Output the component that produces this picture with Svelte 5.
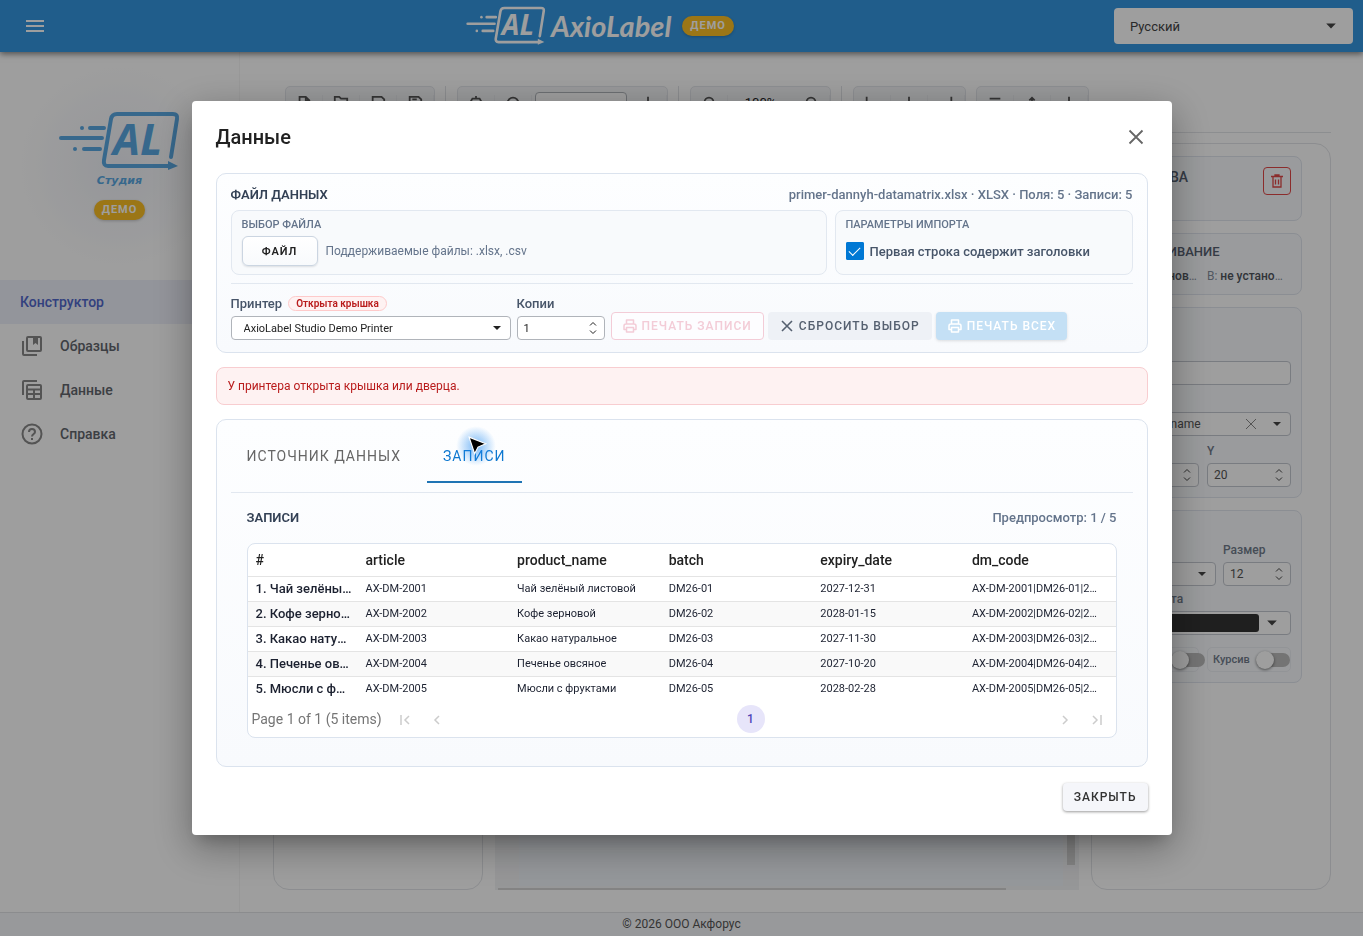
<script>
	let tab = $state('records');
	let headerRow = $state(true);
	let copies = $state(1);

	const columns = ['#', 'article', 'product_name', 'batch', 'expiry_date', 'dm_code'];
	const records = [
		{ title: 'Чай зелёный листовой', article: 'AX-DM-2001', batch: 'DM26-01', expiry: '2027-12-31' },
		{ title: 'Кофе зерновой', article: 'AX-DM-2002', batch: 'DM26-02', expiry: '2028-01-15' },
		{ title: 'Какао натуральное', article: 'AX-DM-2003', batch: 'DM26-03', expiry: '2027-11-30' },
		{ title: 'Печенье овсяное', article: 'AX-DM-2004', batch: 'DM26-04', expiry: '2027-10-20' },
		{ title: 'Мюсли с фруктами', article: 'AX-DM-2005', batch: 'DM26-05', expiry: '2028-02-28' }
	];
</script>

{#snippet logo()}
	<svg class="logo" viewBox="0 0 121 61" aria-hidden="true">
		<g fill="none" stroke="currentColor" stroke-width="4" stroke-linecap="round" stroke-linejoin="round">
			<path d="M112 46 L118 8 Q119 3 114 3 H58 Q53 3 52 8 L45 49 Q44 55 49 55 H110" />
			<path d="M31 17 H45 M2 27 H43 M25 38 H41" />
		</g>
		<circle cx="23" cy="17" r="2" fill="currentColor" />
		<circle cx="16" cy="38" r="2" fill="currentColor" />
		<path d="M109 50 L119 55 L109 59 Z" fill="currentColor" />
		<text x="54" y="44" fill="currentColor">AL</text>
	</svg>
{/snippet}

{#snippet caret()}
	<svg class="caret" width="10" height="6" viewBox="0 0 10 6" aria-hidden="true"><path d="M1 1h8L5 5z" fill="currentColor" /></svg>
{/snippet}

{#snippet steps()}
	<svg class="steps" width="8" height="14" viewBox="0 0 8 14" fill="none" stroke="currentColor" aria-hidden="true"><path d="M1 4.500L4 1.500l3 3M1 9.500l3 3 3-3" /></svg>
{/snippet}

{#snippet printer()}
	<svg width="14" height="14" viewBox="0 0 14 14" fill="none" stroke="currentColor" stroke-width="1.500" stroke-linejoin="round" aria-hidden="true">
		<path d="M3.500 5V1h7v4M3.500 10.500H1V7q0-2 2-2h8q2 0 2 2v3.500h-2.500M3.500 8.500h7V13h-7z" />
	</svg>
{/snippet}

<div class="app">
	<header class="topbar">
		<button class="menu" aria-label="Меню"><span></span><span></span><span></span></button>
		<div class="brand">
			{@render logo()}
			<span class="name">AxioLabel</span>
			<span class="demo">ДЕМО</span>
		</div>
		<div class="control lang">
			<select aria-label="Язык"><option>Русский</option></select>
			{@render caret()}
		</div>
	</header>

	<div class="body">
		<aside>
			<div class="studio">
				{@render logo()}
				<span class="studio-name">Студия</span>
				<span class="demo">ДЕМО</span>
			</div>
			<nav>
				<a class="active" href="#designer">Конструктор</a>
				<a href="#samples">
					<svg width="24" height="24" viewBox="0 0 24 24" fill="none" stroke="currentColor" stroke-width="2" aria-hidden="true">
						<rect x="7" y="3" width="14" height="14" rx="1" /><path d="M3 7v13q0 1 1 1h13" /><path d="M13 4h5v7l-2.500-2-2.500 2z" fill="currentColor" stroke="none" />
					</svg>
					Образцы
				</a>
				<a href="#data">
					<svg width="24" height="24" viewBox="0 0 24 24" fill="none" stroke="currentColor" stroke-width="2" aria-hidden="true">
						<rect x="7" y="7" width="14" height="14" rx="1" /><path d="M3 17V4q0-1 1-1h13M7 11.500h14M7 16h14M14 11.500V21" />
					</svg>
					Данные
				</a>
				<a href="#help">
					<svg width="24" height="24" viewBox="0 0 24 24" fill="none" stroke="currentColor" stroke-width="2" aria-hidden="true">
						<circle cx="12" cy="12" r="9.500" /><path d="M9 10q0-3 3-3t3 3c0 2-3 2-3 4.500M12 16v2" />
					</svg>
					Справка
				</a>
			</nav>
		</aside>

		<main>
			<div class="toolbar">
				<div class="group">
					<button aria-label="Новый"><svg viewBox="0 0 18 18"><path d="M4 2h7l4 4v10H4zM11 2v4h4" /></svg></button>
					<button aria-label="Открыть"><svg viewBox="0 0 18 18"><path d="M2 15V2h5l2 2h7v11z" /></svg></button>
					<button aria-label="Сохранить"><svg viewBox="0 0 18 18"><path d="M3 2h10l3 3v11H3zM6 16v-6h7v6" /></svg></button>
					<button aria-label="Сохранить как"><svg viewBox="0 0 18 18"><path d="M3 2h10l3 3v11H3zM6 5h5" /></svg></button>
				</div>
				<i class="sep"></i>
				<div class="group">
					<button aria-label="Настройки"><svg viewBox="0 0 18 18"><path d="M9 1v3M5 4h8l3 5-3 5H5L2 9z" /></svg></button>
					<button aria-label="Просмотр"><svg viewBox="0 0 18 18"><circle cx="9" cy="9" r="6" /></svg></button>
					<input class="zoom" aria-label="Размер" />
					<button aria-label="Добавить"><svg viewBox="0 0 18 18"><path d="M9 2v14M2 9h14" /></svg></button>
				</div>
				<i class="sep"></i>
				<div class="group">
					<button aria-label="Уменьшить"><svg viewBox="0 0 18 18"><circle cx="9" cy="8" r="5" /><path d="M13 11l4 4" /></svg></button>
					<span class="percent">100%</span>
					<button aria-label="Увеличить"><svg viewBox="0 0 18 18"><circle cx="9" cy="8" r="5" /><path d="M13 11l4 4" /></svg></button>
				</div>
				<i class="sep"></i>
				<div class="group">
					<button aria-label="По левому краю"><svg viewBox="0 0 18 18"><path d="M3 2v15M6 9h10" /></svg></button>
					<button aria-label="По центру"><svg viewBox="0 0 18 18"><path d="M9 2v15M3 9h12" /></svg></button>
					<button aria-label="По правому краю"><svg viewBox="0 0 18 18"><path d="M15 2v15M2 9h10" /></svg></button>
				</div>
				<div class="group">
					<button aria-label="По верху"><svg viewBox="0 0 18 18"><path d="M3 4h12M9 7v9" /></svg></button>
					<button aria-label="Вверх"><svg viewBox="0 0 18 18"><path d="M9 16V3M6 6l3-3 3 3" /></svg></button>
					<button aria-label="Вниз"><svg viewBox="0 0 18 18"><path d="M9 2v13M5 12l4 4 4-4" /></svg></button>
				</div>
			</div>

			<div class="workspace">
				<div class="panel"></div>
				<div class="canvas"><div class="paper"></div><i class="vthumb"></i><i class="hthumb"></i></div>
				<div class="panel props">
					<section class="prop-head">
						<h3>СВОЙСТВА</h3>
						<button class="trash" aria-label="Удалить">
							<svg width="14" height="14" viewBox="0 0 14 14" fill="none" stroke="currentColor" stroke-width="1.300"><path d="M1 2.500h12M5 2V1h4v1M3 3v10h8V3M5.500 5.500v5M8.500 5.500v5" /></svg>
						</button>
					</section>
					<section>
						<h3>ВЫРАВНИВАНИЕ</h3>
						<div class="pair align"><span>Г: <b>не установлено</b></span><span>В: <b>не установлено</b></span></div>
					</section>
					<section>
						<h3>ОБЪЕКТ</h3>
						<label>Имя<input /></label>
						<label>Поле
							<span class="control">
								<select><option>product_name</option></select>
								<svg class="clear" width="12" height="12" viewBox="0 0 12 12" stroke="currentColor"><path d="M1 1l10 10M11 1L1 11" /></svg>
								{@render caret()}
							</span>
						</label>
						<div class="pair">
							<label>X<span class="control"><input type="number" value="20" />{@render steps()}</span></label>
							<label>Y<span class="control"><input type="number" value="20" />{@render steps()}</span></label>
						</div>
					</section>
					<section class="font">
						<h3>ШРИФТ</h3>
						<div class="pair">
							<label>Шрифт<span class="control"><select><option>Arial</option></select>{@render caret()}</span></label>
							<label>Размер<span class="control"><input type="number" value="12" />{@render steps()}</span></label>
						</div>
						<label>Цвет текста<span class="color"><span class="swatch"></span>{@render caret()}</span></label>
						<div class="toggles">
							<label>Жирный<input type="checkbox" role="switch" /></label>
							<label>Курсив<input type="checkbox" role="switch" /></label>
						</div>
					</section>
				</div>
			</div>
		</main>
	</div>

	<footer>© 2026 ООО Акфорус</footer>
</div>

<div class="overlay">
	<div class="dialog" role="dialog" aria-modal="true" aria-labelledby="dialog-title">
		<div class="dialog-head">
			<h2 id="dialog-title">Данные</h2>
			<button class="close" aria-label="Закрыть окно">
				<svg width="16" height="16" viewBox="0 0 16 16" stroke="currentColor" stroke-width="1.800" aria-hidden="true"><path d="M1.500 1.500l13 13M14.500 1.500l-13 13" /></svg>
			</button>
		</div>

		<section class="card file">
			<div class="row-head">
				<h3>ФАЙЛ ДАННЫХ</h3>
				<span>primer-dannyh-datamatrix.xlsx · XLSX · Поля: 5 · Записи: 5</span>
			</div>
			<div class="boxes">
				<div class="box">
					<h4>ВЫБОР ФАЙЛА</h4>
					<div class="line">
						<button class="pick">ФАЙЛ</button>
						<span class="hint">Поддерживаемые файлы: .xlsx, .csv</span>
					</div>
				</div>
				<div class="box">
					<h4>ПАРАМЕТРЫ ИМПОРТА</h4>
					<label class="line check"><input type="checkbox" bind:checked={headerRow} />Первая строка содержит заголовки</label>
				</div>
			</div>
			<div class="print">
				<div class="field wide">
					<div class="label"><label for="printer">Принтер</label><span class="status">Открыта крышка</span></div>
					<div class="control">
						<select id="printer"><option>AxioLabel Studio Demo Printer</option></select>
						{@render caret()}
					</div>
				</div>
				<div class="field">
					<div class="label"><label for="copies">Копии</label></div>
					<div class="control"><input id="copies" type="number" bind:value={copies} />{@render steps()}</div>
				</div>
				<div class="buttons">
					<button class="btn one" disabled>{@render printer()}ПЕЧАТЬ ЗАПИСИ</button>
					<button class="btn reset">
						<svg width="12" height="12" viewBox="0 0 12 12" stroke="currentColor" stroke-width="1.600" aria-hidden="true"><path d="M1 1l10 10M11 1L1 11" /></svg>СБРОСИТЬ ВЫБОР
					</button>
					<button class="btn all" disabled>{@render printer()}ПЕЧАТЬ ВСЕХ</button>
				</div>
			</div>
		</section>

		<div class="alert" role="alert">У принтера открыта крышка или дверца.</div>

		<section class="card data">
			<div class="tabs" role="tablist">
				<button role="tab" aria-selected={tab === 'source'} class:on={tab === 'source'} onclick={() => (tab = 'source')}>ИСТОЧНИК ДАННЫХ</button>
				<button role="tab" aria-selected={tab === 'records'} class:on={tab === 'records'} onclick={() => (tab = 'records')}>
					ЗАПИСИ
					<span class="pointer">
						<svg width="20" height="20" viewBox="0 0 18 18" aria-hidden="true"><path d="M1 1l15 6-7 3-3 6z" fill="#000" stroke="#fff" stroke-width="1" /></svg>
					</span>
				</button>
			</div>
			<div class="records">
				<div class="row-head">
					<h3>ЗАПИСИ</h3>
					<span>Предпросмотр: 1 / 5</span>
				</div>
				<div class="grid">
					<table>
						<thead>
							<tr>{#each columns as column}<th>{column}</th>{/each}</tr>
						</thead>
						<tbody>
							{#each records as row, i}
								<tr>
									<td>{i + 1}. {row.title}</td>
									<td>{row.article}</td>
									<td>{row.title}</td>
									<td>{row.batch}</td>
									<td>{row.expiry}</td>
									<td>{row.article}|{row.batch}|{row.expiry}</td>
								</tr>
							{/each}
						</tbody>
					</table>
					<div class="pager">
						<span>Page 1 of 1 (5 items)</span>
						<button disabled aria-label="Первая"><svg width="12" height="12" viewBox="0 0 12 12"><path d="M2 1v10M10 2L6 6l4 4" /></svg></button>
						<button disabled aria-label="Назад"><svg width="12" height="12" viewBox="0 0 12 12"><path d="M8 2L4 6l4 4" /></svg></button>
						<div class="pages"><button class="page">1</button></div>
						<button disabled aria-label="Вперёд"><svg width="12" height="12" viewBox="0 0 12 12"><path d="M4 2l4 4-4 4" /></svg></button>
						<button disabled aria-label="Последняя"><svg width="12" height="12" viewBox="0 0 12 12"><path d="M2 2l4 4-4 4M10 1v10" /></svg></button>
					</div>
				</div>
			</div>
		</section>

		<div class="actions"><button class="dismiss">ЗАКРЫТЬ</button></div>
	</div>
</div>

<style>
	:global(body) {
		margin: 0;
		background: #fff;
		font-family: Roboto, "Noto Sans", sans-serif;
		font-size: 12px;
		color: #212121;
	}
	* {
		box-sizing: border-box;
	}
	h2,
	h3,
	h4 {
		margin: 0;
	}
	button,
	input,
	select {
		font: inherit;
		color: inherit;
		margin: 0;
	}
	button {
		padding: 0;
		border: none;
		background: none;
		cursor: pointer;
	}
	select,
	input {
		appearance: none;
		width: 100%;
		min-width: 0;
		height: 24px;
		padding: 0 12px;
		border: 1px solid #b0b4ba;
		border-radius: 4px;
		background: #fff;
	}
	input {
		padding: 0 6px;
	}
	input[type='number'] {
		-moz-appearance: textfield;
		appearance: textfield;
	}
	input::-webkit-inner-spin-button {
		display: none;
	}

	/* a control with its arrow stacked in one grid cell */
	.control {
		display: grid;
		align-items: center;
	}
	.control > :global(*) {
		grid-area: 1 / 1;
	}
	.caret,
	.steps,
	.clear {
		justify-self: end;
		margin-right: 9px;
		pointer-events: none;
	}
	.steps {
		margin-right: 8px;
	}
	.clear {
		margin-right: 34px;
		color: #888;
	}

	.app {
		min-height: 100vh;
		display: flex;
		flex-direction: column;
	}
	.topbar {
		display: flex;
		align-items: center;
		justify-content: space-between;
		height: 52px;
		padding: 0 10px 0 26px;
		background: #3496e0;
		box-shadow: 0 2px 6px rgba(0, 0, 0, 0.5);
		color: #fff;
		z-index: 1;
	}
	.menu {
		display: flex;
		flex-direction: column;
		gap: 3px;
		width: 60px;
	}
	.menu span {
		width: 18px;
		height: 2px;
		background: #fff;
	}
	.logo {
		width: 121px;
		height: 61px;
		flex-shrink: 0;
	}
	.logo text {
		font: italic 700 43px "Open Sans", sans-serif;
	}
	.brand {
		display: flex;
		align-items: center;
	}
	.brand .logo {
		width: 80px;
		height: 40px;
	}
	.name {
		margin: 0 11px 0 5px;
		font: italic 700 29px/36px Lato, sans-serif;
	}
	.demo {
		padding: 0 8px;
		border-radius: 10px;
		background: #fbbf24;
		box-shadow: 0 1px 3px rgba(0, 0, 0, 0.2);
		color: #fff;
		font-size: 11px;
		font-weight: 700;
		line-height: 20px;
		letter-spacing: 1px;
	}
	.lang {
		width: 239px;
		color: #444;
		font-size: 13px;
	}
	.lang select {
		height: 36px;
		padding: 0 16px;
		border: none;
		background: #fff;
	}
	.lang .caret {
		width: 12px;
		height: 8px;
		margin-right: 16px;
	}

	.body {
		flex: 1;
		display: flex;
	}
	aside {
		width: 240px;
		flex-shrink: 0;
		border-right: 1px solid #f6f6f6;
	}
	.studio {
		display: flex;
		flex-direction: column;
		align-items: center;
		height: 228px;
		padding-top: 59px;
		background: radial-gradient(circle at 50% 50%, #f0f2f8, #fff 60%);
		color: #5aa8e2;
	}
	.studio-name {
		margin-bottom: 11px;
		font: italic 700 11px/17px "DejaVu Sans", sans-serif;
	}
	nav a {
		display: flex;
		align-items: center;
		gap: 16px;
		height: 44px;
		padding: 0 20px;
		color: #62666d;
		font-size: 14px;
		font-weight: 500;
		text-decoration: none;
	}
	nav .active {
		background: #eef0fa;
		color: #5168cc;
	}
	nav svg {
		color: #888;
	}

	main {
		flex: 1;
		display: flex;
		flex-direction: column;
		min-width: 0;
		padding: 34px 32px 22px 33px;
	}
	.toolbar {
		display: flex;
		gap: 10px;
		padding: 0 12px 13px;
		border-bottom: 1px solid #e3e5e9;
	}
	.group {
		display: flex;
		align-items: center;
		height: 33px;
		border: 1px solid #e3e6eb;
		border-radius: 5px;
		background: #f5f6f8;
	}
	.group button {
		display: flex;
		justify-content: center;
		width: 37px;
		border-right: 1px solid #eceef1;
	}
	.group svg {
		width: 16px;
		height: 16px;
		fill: none;
		stroke: #555;
		stroke-width: 2;
	}
	.zoom {
		width: 92px;
		height: 22px;
		margin: 0 3px;
	}
	.percent {
		width: 65px;
		font-size: 13px;
		text-align: center;
	}
	.sep {
		width: 2px;
		border-left: 1px solid #e0e2e6;
	}
	.workspace {
		flex: 1;
		display: flex;
		gap: 12px;
		margin-top: 10px;
	}
	.panel {
		width: 210px;
		border: 1px solid #e2e4e8;
		border-radius: 16px;
	}
	.canvas {
		flex: 1;
		display: grid;
		background: #f3f4f6;
	}
	.canvas > * {
		grid-area: 1 / 1;
	}
	.paper {
		margin: 24px 16px 4px 24px;
		background: #f1f5fa;
	}
	.vthumb {
		place-self: end;
		width: 8px;
		height: 400px;
		margin: 0 4px 25px;
		background: #d4d4d4;
	}
	.hthumb {
		align-self: end;
		width: 87%;
		height: 2px;
		margin-left: 3px;
		background: #d4d4d4;
	}

	.props {
		display: flex;
		flex-direction: column;
		gap: 12px;
		width: 240px;
		padding: 12px 28px 12px 12px;
		color: #566070;
	}
	.props section {
		display: flex;
		flex-direction: column;
		gap: 8px;
		padding: 10px;
		border: 1px solid #e0e5ee;
		border-radius: 8px;
		background: #f9fbfe;
	}
	.props h3 {
		font-size: 13px;
		font-weight: 500;
		line-height: 16px;
	}
	.props .prop-head {
		flex-direction: row;
		justify-content: space-between;
		min-height: 65px;
	}
	.props .prop-head h3 {
		padding-top: 2px;
		font-size: 14px;
	}
	.trash {
		display: flex;
		align-items: center;
		justify-content: center;
		width: 28px;
		height: 28px;
		border: 1px solid #e04848;
		border-radius: 4px;
		color: #e04848;
	}
	.props label {
		display: flex;
		flex-direction: column;
		gap: 5px;
		min-width: 0;
		font-weight: 500;
		line-height: 14px;
		color: #717b8b;
	}
	.props input,
	.props select {
		border-color: #c4c8d0;
		font-weight: 400;
		color: #555;
	}
	.props select {
		padding: 0 8px;
	}
	.pair,
	.toggles {
		display: grid;
		grid-template-columns: 1fr 1fr;
		gap: 8px;
	}
	.props .font {
		gap: 6px;
	}
	.font .pair {
		grid-template-columns: 1fr 68px;
		gap: 7px;
	}
	.align {
		line-height: 16px;
		color: #858e9c;
	}
	.align span {
		overflow: hidden;
		text-overflow: ellipsis;
		white-space: nowrap;
	}
	.align span:last-child {
		padding-right: 4px;
	}
	.align b {
		font-weight: 500;
		color: #50545c;
	}
	.props .caret,
	.props .steps {
		color: #444;
	}
	.color {
		display: flex;
		align-items: center;
		height: 24px;
		border: 1px solid #c4c8d0;
		border-radius: 4px;
		background: #fff;
	}
	.color .caret {
		width: 12px;
		height: 8px;
		margin-right: 12px;
	}
	.swatch {
		flex: 1;
		height: 18px;
		margin-right: 7px;
		border-radius: 3px;
		background: #333;
	}
	.toggles {
		padding-top: 6px;
	}
	.props .toggles label {
		flex-direction: row;
		align-items: center;
		gap: 6px;
		height: 25px;
		padding-left: 5px;
		border: 1px solid #eceff4;
		border-radius: 5px;
		font-size: 11px;
	}
	.props .toggles input {
		flex-shrink: 0;
		width: 34px;
		height: 14px;
		padding: 0;
		border: none;
		border-radius: 7px;
		background: #bbb;
	}
	.toggles input::before {
		content: '';
		display: block;
		width: 18px;
		height: 18px;
		margin-top: -2px;
		border-radius: 50%;
		background: #fff;
		box-shadow: 0 1px 3px rgba(0, 0, 0, 0.5);
	}

	footer {
		height: 24px;
		border-top: 1px solid #e0e2e6;
		background: #f6f7fa;
		color: #555;
		line-height: 23px;
		text-align: center;
	}

	.overlay {
		position: fixed;
		inset: 0;
		z-index: 10;
		display: flex;
		align-items: center;
		justify-content: center;
		background: rgba(0, 0, 0, 0.38);
	}
	.dialog {
		width: 92%;
		max-width: 980px;
		padding: 0 24px 24px;
		border-radius: 4px;
		background: #fff;
		box-shadow: 0 11px 15px -7px rgba(0, 0, 0, 0.2), 0 12px 38px 3px rgba(0, 0, 0, 0.3);
	}
	.dialog-head {
		display: flex;
		align-items: center;
		justify-content: space-between;
		height: 72px;
	}
	.dialog-head h2 {
		font-size: 20px;
		font-weight: 500;
	}
	.close {
		display: flex;
		margin-right: 4px;
		color: #666;
	}
	.card {
		padding: 14px 14px 12px;
		border: 1px solid #dbe3ee;
		border-radius: 10px;
		background: linear-gradient(#fdfeff, #f8fafd);
	}
	.row-head {
		display: flex;
		justify-content: space-between;
		font-size: 13px;
		line-height: 14px;
	}
	.row-head h3 {
		font-size: 13px;
		font-weight: 600;
		color: #334155;
	}
	.row-head span {
		font-weight: 500;
		color: #64748b;
	}
	.boxes {
		display: grid;
		grid-template-columns: 2fr 1fr;
		gap: 8px;
		margin: 8px 0;
	}
	.box {
		padding: 8px 10px;
		border: 1px solid #e2e8f0;
		border-radius: 8px;
		background: #f8fafc;
	}
	.box h4 {
		margin-bottom: 5px;
		font-size: 11px;
		font-weight: 500;
		line-height: 12px;
		color: #64748b;
	}
	.line {
		display: flex;
		align-items: center;
		gap: 8px;
		height: 30px;
	}
	.pick {
		width: 76px;
		height: 30px;
		border: 1px solid #cbd5e1;
		border-radius: 6px;
		background: linear-gradient(#fff, #f8fafc);
		box-shadow: 0 1px 2px rgba(15, 23, 42, 0.12);
		font-size: 11px;
		font-weight: 600;
		letter-spacing: 1px;
	}
	.hint {
		color: #64748b;
	}
	.check {
		gap: 6px;
		font-size: 13px;
		font-weight: 500;
		color: #475569;
	}
	.check input {
		display: grid;
		place-items: center;
		width: 18px;
		height: 18px;
		padding: 0;
		border: none;
		border-radius: 2px;
		background: #fff;
		box-shadow: inset 0 0 0 2px #0078d4;
	}
	.check input:checked {
		background: #0078d4;
	}
	.check input:checked::before {
		content: '';
		width: 10px;
		height: 5px;
		margin-bottom: 3px;
		border-left: 1px solid #fff;
		border-bottom: 1px solid #fff;
		transform: rotate(-45deg);
	}
	.print {
		display: flex;
		align-items: flex-end;
		gap: 6px;
		padding-top: 12px;
		border-top: 1px solid #e2e8f0;
	}
	.field {
		width: 88px;
	}
	.wide {
		width: 280px;
	}
	.label {
		display: flex;
		align-items: center;
		gap: 6px;
		height: 15px;
		margin-bottom: 5px;
		font-size: 13px;
		font-weight: 500;
		color: #475569;
	}
	.status {
		padding: 0 7px;
		border: 1px solid #fecaca;
		border-radius: 8px;
		background: #fef2f2;
		color: #b91c1c;
		font-size: 10px;
		font-weight: 600;
		line-height: 13px;
	}
	.field select,
	.field input {
		font-size: 11px;
	}
	.buttons {
		display: flex;
		gap: 4px;
	}
	.btn {
		display: flex;
		align-items: center;
		gap: 5px;
		height: 28px;
		padding: 0 11px 0 12px;
		border-radius: 4px;
		font-weight: 500;
		letter-spacing: 1px;
		font-size: 12px;
	}
	.one {
		padding: 0 11px;
		border: 1px solid #f3ccd7;
		background: #fdfdff;
		color: #f3ccd7;
	}
	.reset {
		gap: 6px;
		padding: 0 12px 0 13px;
		background: #eef1f6;
		color: #556070;
	}
	.all {
		background: #c4e0f5;
		box-shadow: 0 1px 3px rgba(0, 0, 0, 0.12);
		color: #fff;
	}
	.alert {
		margin: 14px 0;
		padding: 0 11px;
		border: 1px solid #f8cdd0;
		border-radius: 8px;
		background: #fef2f2;
		color: #b91c1c;
		line-height: 36px;
	}
	.data {
		padding-bottom: 14px;
	}
	.tabs {
		display: flex;
		gap: 10px;
		padding-bottom: 9px;
		border-bottom: 1px solid #e2e8f0;
	}
	.tabs button {
		position: relative;
		height: 49px;
		padding: 0 16px 4px;
		border-bottom: 2px solid transparent;
		color: #666;
		font-size: 14px;
		letter-spacing: 1px;
	}
	.tabs .on {
		border-color: #1f74b4;
		color: #0e78d0;
	}
	.pointer {
		position: absolute;
		top: -8px;
		left: 29px;
		width: 40px;
		height: 40px;
		padding: 10px 12px;
		border-radius: 50%;
		background: radial-gradient(circle, rgba(30, 136, 240, 0.6), rgba(30, 136, 240, 0) 70%);
	}
	.records {
		padding: 18px 16px 14px;
	}
	.grid {
		margin-top: 18px;
		overflow: hidden;
		border: 1px solid #dbe3ee;
		border-radius: 8px;
		background: #fff;
	}
	table {
		width: 100%;
		table-layout: fixed;
		border-collapse: collapse;
	}
	th,
	td {
		padding: 0 8px;
		border-bottom: 1px solid #e4e4e4;
		overflow: hidden;
		text-align: left;
		text-overflow: ellipsis;
		white-space: nowrap;
	}
	th {
		height: 32px;
		font-size: 14px;
		font-weight: 500;
	}
	th:first-child {
		width: 110px;
	}
	td {
		height: 25px;
		font-size: 11px;
		color: #1c2130;
	}
	td:first-child {
		padding-right: 6px;
		font-size: 13px;
		font-weight: 500;
	}
	td:last-child {
		padding-right: 14px;
	}
	tbody tr:nth-child(even) {
		background: #f9f9f9;
	}
	tbody tr:last-child td {
		border-bottom: none;
	}
	.pager {
		display: flex;
		align-items: center;
		height: 36px;
		padding: 0 3px 0 4px;
		color: #757575;
		font-size: 14px;
	}
	.pager > span {
		margin-right: 7px;
	}
	.pager > button {
		width: 32px;
	}
	.pager svg {
		vertical-align: middle;
		fill: none;
		stroke: #ccc;
		stroke-width: 1.500;
	}
	.pages {
		flex: 1;
		text-align: center;
	}
	.page {
		width: 28px;
		height: 28px;
		border-radius: 50%;
		background: #e7e5fa;
		color: #4f46b8;
		font-size: 12px;
		font-weight: 500;
	}
	.actions {
		display: flex;
		justify-content: flex-end;
		margin-top: 16px;
	}
	.dismiss {
		height: 28px;
		padding: 0 11px;
		border-radius: 4px;
		background: #f5f6fa;
		box-shadow: 0 1px 3px rgba(0, 0, 0, 0.4);
		color: #333;
		font-size: 12px;
		font-weight: 500;
		letter-spacing: 1px;
	}
</style>
